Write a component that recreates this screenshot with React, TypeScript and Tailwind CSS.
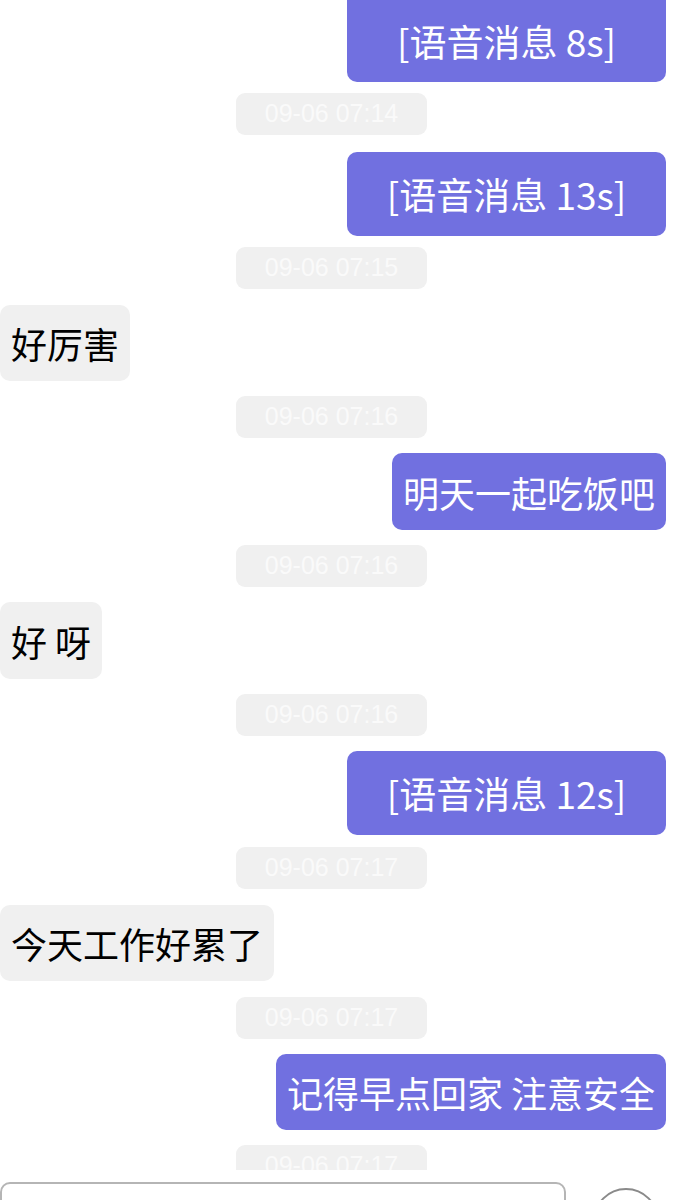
type Item =
  | { kind: "out"; text: string; voice?: boolean; cls: string }
  | { kind: "in"; text: string; cls: string }
  | { kind: "time"; text: string; cls: string }

// spacing is irregular in the screenshot, so each row carries its own margin / height
const items: Item[] = [
  { kind: "out", text: "[语音消息 8s]", voice: true, cls: "h-[82px] rounded-b-[10px]" },
  { kind: "time", text: "09-06 07:14", cls: "mt-[11px]" },
  { kind: "out", text: "[语音消息 13s]", voice: true, cls: "mt-[17px] h-[84px] rounded-[10px]" },
  { kind: "time", text: "09-06 07:15", cls: "mt-[11px]" },
  { kind: "in", text: "好厉害", cls: "mt-[16px] h-[76px]" },
  { kind: "time", text: "09-06 07:16", cls: "mt-[15px]" },
  { kind: "out", text: "明天一起吃饭吧", cls: "mt-[15px] h-[77px] rounded-[10px]" },
  { kind: "time", text: "09-06 07:16", cls: "mt-[15px]" },
  { kind: "in", text: "好 呀", cls: "mt-[15px] h-[77px]" },
  { kind: "time", text: "09-06 07:16", cls: "mt-[15px]" },
  { kind: "out", text: "[语音消息 12s]", voice: true, cls: "mt-[15px] h-[84px] rounded-[10px]" },
  { kind: "time", text: "09-06 07:17", cls: "mt-[12px]" },
  { kind: "in", text: "今天工作好累了", cls: "mt-[16px] h-[76px]" },
  { kind: "time", text: "09-06 07:17", cls: "mt-[16px]" },
  { kind: "out", text: "记得早点回家 注意安全", cls: "mt-[15px] h-[76px] rounded-[10px]" },
  { kind: "time", text: "09-06 07:17", cls: "mt-[15px]" },
]

function Row({ item }: { item: Item }) {
  if (item.kind === "time") {
    return (
      <div className={"flex pl-[236px] " + item.cls}>
        <div className="flex h-[42px] w-[191px] items-center justify-center rounded-[9px] bg-[#f0f0f0] font-['Liberation_Sans',Arial,sans-serif] text-[25px] text-[#fafafa]">
          {item.text}
        </div>
      </div>
    )
  }
  if (item.kind === "in") {
    return (
      <div className={"flex " + item.cls}>
        <div className="flex items-center rounded-[10px] bg-[#f0f0f0] px-[11px] font-['Noto_Sans_CJK_SC','Noto_Sans',sans-serif] text-[36px] leading-none text-black">
          {item.text}
        </div>
      </div>
    )
  }
  return (
    <div className={"flex justify-end pr-[10px] " + (item.cls.startsWith("mt") ? item.cls.split(" ")[0] : "")}>
      <div
        className={
          "flex items-center justify-center bg-[#7170e0] font-['Noto_Sans_CJK_SC','Noto_Sans',sans-serif] leading-none text-white " +
          (item.voice ? "w-[319px] text-[37px] " : "px-[11px] text-[36px] ") +
          item.cls.replace(/^mt-\S+ /, "")
        }
      >
        {item.text}
      </div>
    </div>
  )
}

export default function App() {
  return (
    <div className="h-[1200px] w-[676px] overflow-hidden bg-white">
      <div className="h-[1170px] overflow-hidden">
        {items.map((item, i) => (
          <Row key={i} item={item} />
        ))}
      </div>
      <div className="flex items-start pt-[12px]">
        <div className="h-[60px] w-[566px] rounded-[10px] border-2 border-[#b5b5b5] bg-white" />
        <div className="ml-[27px] mt-[6px] h-[66px] w-[66px] rounded-full border-2 border-[#8a8a8a]" />
      </div>
    </div>
  )
}
